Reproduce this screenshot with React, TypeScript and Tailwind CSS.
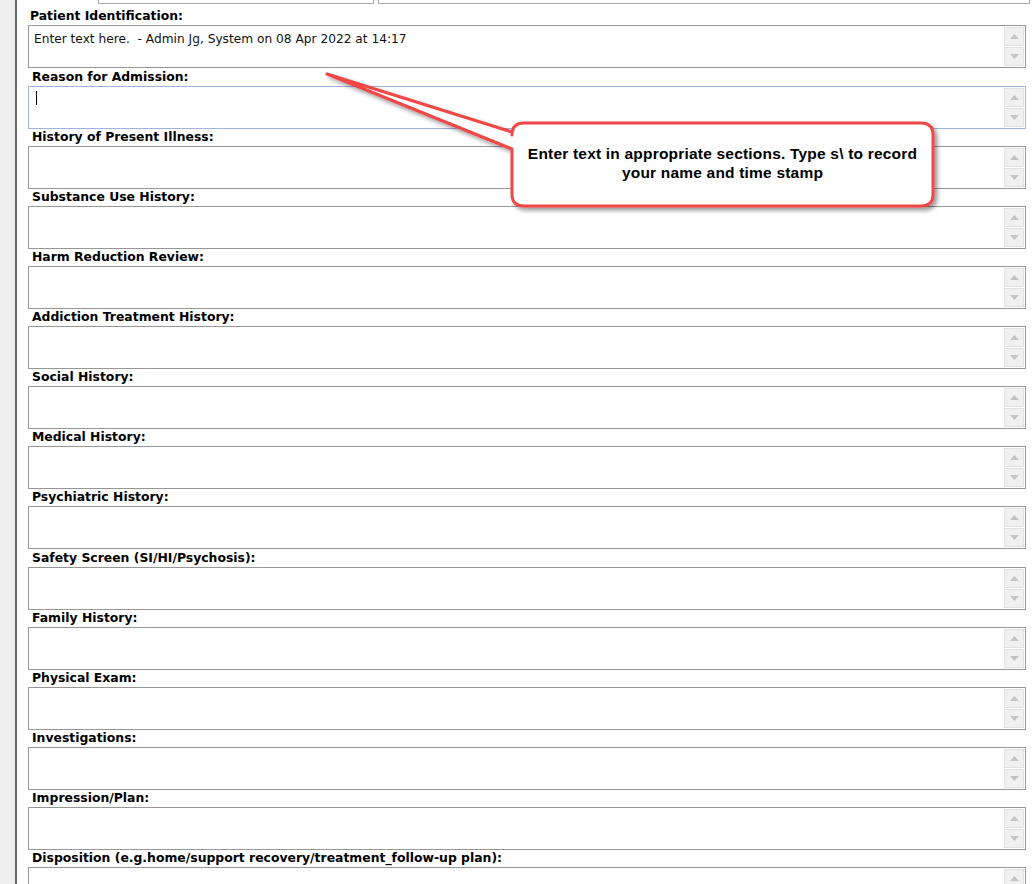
import React from 'react';

const sections = [
    { label: 'Patient Identification:', value: 'Enter text here.  - Admin Jg, System on 08 Apr 2022 at 14:17' },
    { label: 'Reason for Admission:', focused: true },
    { label: 'History of Present Illness:' },
    { label: 'Substance Use History:' },
    { label: 'Harm Reduction Review:' },
    { label: 'Addiction Treatment History:' },
    { label: 'Social History:' },
    { label: 'Medical History:' },
    { label: 'Psychiatric History:' },
    { label: 'Safety Screen (SI/HI/Psychosis):' },
    { label: 'Family History:' },
    { label: 'Physical Exam:' },
    { label: 'Investigations:' },
    { label: 'Impression/Plan:' },
    { label: 'Disposition (e.g.home/support recovery/treatment_follow-up plan):' },
];

const Arrow = ({ up }: { up?: boolean }) => (
    <svg width="9" height="5" viewBox="0 0 9 5">
        {up ? <path d="M0 5 L4.5 0 L9 5 Z" fill="#c3c3c3" /> : <path d="M0 0 L4.5 5 L9 0 Z" fill="#c3c3c3" />}
    </svg>
);

const Field = ({ label, value, focused, first, tall }: { label: string; value?: string; focused?: boolean; first?: boolean; tall?: boolean }) => (
    <div className="flex flex-col">
        <div className={`${tall ? 'h-[18px]' : 'h-[17px]'} flex items-center ${first ? 'pl-[2px]' : 'pl-[4px]'} text-[12.4px] font-bold text-black whitespace-nowrap`} style={{ fontFamily: '"DejaVu Sans", sans-serif' }}>
            {label}
        </div>
        <div className={`relative h-[43px] bg-white border ${focused ? 'border-[#9fb4dc]' : 'border-[#969696]'}`}>
            {value && (
                <div className="pl-[5px] pt-[4px] text-[12.2px] text-[#111] whitespace-pre" style={{ fontFamily: '"DejaVu Sans", sans-serif' }}>
                    {value}
                </div>
            )}
            {focused && <div className="absolute left-[7px] top-[4px] w-px h-[14px] bg-black" />}
            <div className="absolute right-[1px] top-[1px] bottom-[1px] w-[20px] flex flex-col gap-px">
                <div className="flex-1 bg-[#f0f0f0] border border-[#e2e2e2] flex items-center justify-center"><Arrow up /></div>
                <div className="flex-1 bg-[#f0f0f0] border border-[#e2e2e2] flex items-center justify-center"><Arrow /></div>
            </div>
        </div>
    </div>
);

export default function App() {
    return (
        <div className="relative w-[1032px] h-[884px] overflow-hidden flex bg-white">
            <div className="w-[15px] bg-[#f0f0f0]" />
            <div className="w-[2px] bg-[#6a6a6a]" />
            <div className="flex-1 flex flex-col">
                {/* tab strip */}
                <div className="h-[5px] flex items-start">
                    <div className="w-[81px]" />
                    <div className="w-[276px] h-[4px] border-x border-b border-[#a8a8a8]" />
                    <div className="w-[4px]" />
                    <div className="flex-1 h-[4px] border-x border-b border-[#a8a8a8] mr-[2px]" />
                </div>
                <div className="h-px bg-[#1e1e1e]" />
                <div className="h-px bg-[#b0b0b0]" />
                <div className="pt-[4px] pl-[11px] pr-[6px] flex flex-col">
                    {sections.map((s, i) => (
                        <Field key={i} label={s.label} value={s.value} focused={s.focused} first={i === 0} tall={i === 1 || i === 9} />
                    ))}
                </div>
            </div>

            {/* callout */}
            <svg className="absolute left-[310px] top-[60px] pointer-events-none" width="640" height="160" viewBox="310 60 640 160">
                <defs>
                    <filter id="shadow" x="-10%" y="-20%" width="130%" height="150%">
                        <feDropShadow dx="3" dy="3" stdDeviation="2" floodColor="#000" floodOpacity="0.4" />
                    </filter>
                </defs>
                <path
                    d="M524 123 H921 Q933 123 933 135 V194 Q933 206 921 206 H524 Q512 206 512 194 V149 L327 74 L512 132 V135 Q512 123 524 123 Z"
                    fill="#fff"
                    stroke="#f24646"
                    strokeWidth="3"
                    strokeLinejoin="round"
                    filter="url(#shadow)"
                />
            </svg>
            <div className="absolute left-[512px] top-[123px] w-[421px] h-[83px] flex items-center justify-center pb-[4px] text-center text-[15.5px] tracking-[0.2px] leading-[19px] font-bold text-black" style={{ fontFamily: '"Liberation Sans", sans-serif' }}>
                Enter text in appropriate sections. Type s\ to record<br />your name and time stamp
            </div>
        </div>
    );
}
